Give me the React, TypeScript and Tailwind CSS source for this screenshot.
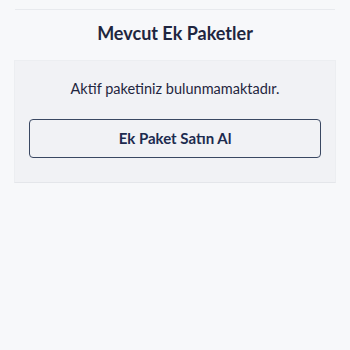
export default function App() {
  return (
    <div className="min-h-[350px] w-[350px] bg-[#f7f8fa] px-[14px] pt-[9px]" style={{ fontFamily: 'Lato, "Noto Sans", sans-serif' }}>
      <div className="mx-[1px] border-t border-[#e8eaee]" />
      <h1 className="mt-[11px] text-center text-[18px] font-bold leading-[24px] text-[#1f2640]">Mevcut Ek Paketler</h1>
      <div className="mt-[15px] border border-[#eceef1] border-b-[#e4e6ea] bg-[#f1f2f5] px-[14px] pt-[17px] pb-[24px]">
        <p className="text-center text-[14.5px] leading-[22px] text-[#1f2640]">Aktif paketiniz bulunmamaktadır.</p>
        <button className="mt-[19px] flex h-[39px] w-full items-center justify-center rounded-[4px] border-[1.5px] border-[#3a4862] text-[15px] font-bold text-[#1d2b4f]">
          Ek Paket Satın Al
        </button>
      </div>
    </div>
  );
}
